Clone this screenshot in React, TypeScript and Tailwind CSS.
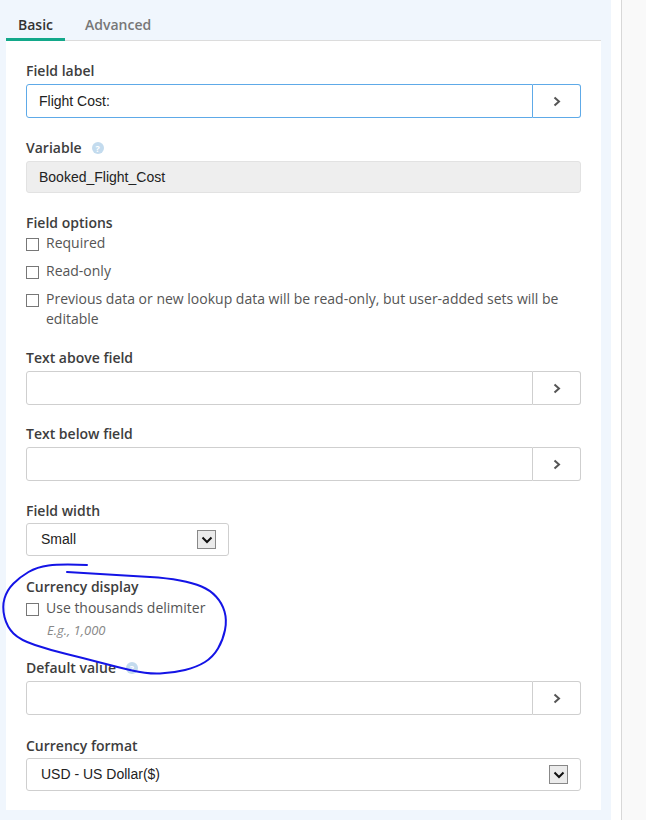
import React from 'react';

const sans = { fontFamily: '"Open Sans", "Noto Sans", sans-serif' };

const ellipsePoints: [number, number][] = [
  [87, 565], [60, 564], [37, 567], [20, 577], [7, 590], [2, 607], [7, 627], [20, 640],
  [50, 650], [83, 658], [117, 667], [147, 674], [173, 673], [197, 667], [213, 657],
  [223, 640], [227, 620], [222, 603], [210, 590], [193, 583], [167, 578], [133, 576],
  [100, 574], [67, 572],
];

function smoothPath(pts: [number, number][], dy: number) {
  let d = `M${pts[0][0]} ${pts[0][1] - dy}`;
  for (let i = 1; i < pts.length - 1; i++) {
    const [x, y] = pts[i];
    const [nx, ny] = pts[i + 1];
    d += ` Q${x} ${y - dy} ${(x + nx) / 2} ${(y + ny) / 2 - dy}`;
  }
  const last = pts[pts.length - 1];
  d += ` L${last[0]} ${last[1] - dy}`;
  return d;
}

function Chevron() {
  return (
    <svg width="8" height="11" viewBox="0 0 8 11" fill="none">
      <path d="M1.5 1.5l4.5 4-4.5 4" stroke="#555" strokeWidth="2" />
    </svg>
  );
}

function HelpIcon() {
  return (
    <span className="ml-2.5 inline-flex h-3 w-3 items-center justify-center rounded-full bg-[#c3dbee] text-[9px] font-bold leading-none text-white">
      ?
    </span>
  );
}

function Label({ children, help }: { children: React.ReactNode; help?: boolean }) {
  return (
    <div className="flex h-[22px] items-center text-[14px] font-semibold leading-[22px] text-[#3d3d3d]" style={sans}>
      {children}
      {help && <HelpIcon />}
    </div>
  );
}

function TextWithButton({ value, focused }: { value?: string; focused?: boolean }) {
  const border = focused ? 'border-[#5eaae8]' : 'border-[#cfcfcf]';
  return (
    <div className="mt-0.5 flex h-[34px]">
      <div
        className={`flex flex-1 items-center rounded-l-[3px] border ${border} px-3 text-[14px] text-[#222]`}
        style={{ fontFamily: '"Liberation Sans", Arial, sans-serif' }}
      >
        {value}
      </div>
      <div className={`flex w-[48px] items-center justify-center rounded-r-[3px] border border-l-0 ${border}`}>
        <Chevron />
      </div>
    </div>
  );
}

function Select({ value, wide }: { value: string; wide?: boolean }) {
  return (
    <div
      className={`mt-px flex h-[33px] items-center justify-between rounded-[3px] border border-[#cfcfcf] pl-[14px] pr-3 text-[14px] text-[#222] ${wide ? 'w-full' : 'w-[203px]'}`}
      style={{ fontFamily: '"Liberation Sans", Arial, sans-serif' }}
    >
      <span>{value}</span>
      <span className="flex h-[19px] w-[19px] items-center justify-center border border-[#888] bg-[#ebebeb]">
        <svg width="12" height="8" viewBox="0 0 12 8" fill="none">
          <path d="M1.5 1.5l4.5 4.5 4.5-4.5" stroke="#111" strokeWidth="2" />
        </svg>
      </span>
    </div>
  );
}

function Check({ children }: { children: React.ReactNode }) {
  return (
    <div className="flex items-start text-[14px] leading-5 text-[#555]" style={sans}>
      <span className="mt-[5px] mr-[7px] h-[13px] w-[13px] shrink-0 border border-[#777] bg-white" />
      <span>{children}</span>
    </div>
  );
}

export default function App() {
  return (
    <div className="relative flex min-h-[820px] w-full">
      <div className="w-[611px] shrink-0 bg-[#f0f6fd] pl-[6px] pr-[10px]">
        {/* Tabs */}
        <div className="flex gap-2 border-b border-[#dcdcdc] text-[14px] font-semibold leading-5" style={sans}>
          <div className="-mb-px border-b-[3px] border-[#13a88a] px-3 pt-[15px] pb-[3px] text-[#333]">Basic</div>
          <div className="px-3 pt-[15px] pb-[3px] text-[#777]">Advanced</div>
        </div>

        {/* Panel */}
        <div className="bg-white px-5 pt-[19px] pb-[19px]">
          <div className="mb-[19px]">
            <Label>Field label</Label>
            <TextWithButton value="Flight Cost:" focused />
          </div>

          <div className="mb-[19px]">
            <Label help>Variable</Label>
            <div
              className="mt-0.5 flex h-[32px] items-center rounded-[3px] border border-[#e2e2e2] bg-[#eeeeee] px-3 text-[14px] text-[#222]"
              style={{ fontFamily: '"Liberation Sans", Arial, sans-serif' }}
            >
              Booked_Flight_Cost
            </div>
          </div>

          <div className="mb-[18px]">
            <Label>Field options</Label>
            <div className="-mt-px space-y-2">
              <Check>Required</Check>
              <Check>Read-only</Check>
              <Check>Previous data or new lookup data will be read-only, but user-added sets will be editable</Check>
            </div>
          </div>

          <div className="mb-[18px]">
            <Label>Text above field</Label>
            <TextWithButton />
          </div>

          <div className="mb-[19px]">
            <Label>Text below field</Label>
            <TextWithButton />
          </div>

          <div className="mb-5">
            <Label>Field width</Label>
            <Select value="Small" />
          </div>

          <div className="mb-[17px]">
            <Label>Currency display</Label>
            <Check>Use thousands delimiter</Check>
            <div className="mt-0.5 pl-[21px] text-[13px] italic leading-5 text-[#888]" style={sans}>
              E.g., 1,000
            </div>
          </div>

          <div className="mb-5">
            <Label help>Default value</Label>
            <div className="mt-px">
              <TextWithButton />
            </div>
          </div>

          <div>
            <Label>Currency format</Label>
            <Select value="USD - US Dollar($)" wide />
          </div>
        </div>
      </div>
      <div className="w-[10px] shrink-0 bg-white" />
      <div className="w-px shrink-0 bg-[#d8d8d8]" />
      <div className="flex-1 bg-[#f9f9f9]" />

      {/* hand-drawn annotation */}
      <svg className="pointer-events-none absolute left-0 top-[555px]" width="240" height="130" viewBox="0 0 240 130" fill="none">
        <path d={smoothPath(ellipsePoints, 555)} stroke="#1414e6" strokeWidth="2" strokeLinecap="round" strokeLinejoin="round" />
      </svg>
    </div>
  );
}
